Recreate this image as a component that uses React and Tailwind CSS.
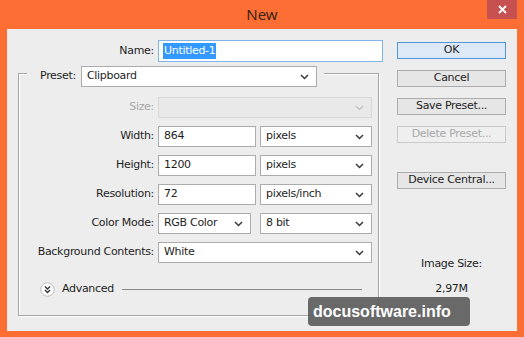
import React from 'react';

const Arrow = ({ disabled }) => (
    <svg width="9" height="6" viewBox="0 0 9 6" className="shrink-0">
        <polyline points="1,1 4.5,4.5 8,1" fill="none" stroke={disabled ? '#c4c4c4' : '#3a3a3a'} strokeWidth="1.5" />
    </svg>
);

const Select = ({ w, text, disabled }) => (
    <div className={`${w} h-[21px] flex items-center justify-between pl-[5px] pr-[7px] border ${disabled ? 'border-[#d9d9d9] bg-[#e9e9e9]' : 'border-[#acacac] bg-white'}`}>
        <span>{text}</span>
        <Arrow disabled={disabled} />
    </div>
);

const Field = ({ w, text }) => (
    <div className={`${w} h-[21px] flex items-center pl-[5px] border border-[#acacac] bg-white`}>{text}</div>
);

const Row = ({ label, disabled, children }) => (
    <div className="flex items-center h-[21px]">
        <div className={`w-[139px] pr-[4px] text-right ${disabled ? 'text-[#a8a8a8]' : ''}`}>{label}</div>
        <div className="flex gap-[4px]">{children}</div>
    </div>
);

const Button = ({ text, disabled, primary }) => (
    <div
        className={`w-[109px] h-[17px] flex items-center justify-center border ${
            primary
                ? 'border-[#4f97d8] bg-[#dde9f6]'
                : disabled
                ? 'border-[#cacaca] bg-[#efefef] text-[#a8a8a8]'
                : 'border-[#acacac] bg-[#e6e6e6]'
        }`}
    >
        {text}
    </div>
);

export default function App() {
    return (
        <div className="relative w-[524px] h-[337px] bg-[#fd6e34] flex flex-col font-['DejaVu_Sans',sans-serif] text-[11px] tracking-[-0.3px] text-[#1e1e1e]">
            {/* title bar */}
            <div className="relative h-[29px] flex items-center justify-center">
                <span className="font-['Noto_Sans',sans-serif] text-[15px] tracking-normal text-[#3b2418] -mt-[1px]">New</span>
                <div className="absolute right-[7px] top-0 w-[30px] h-[19px] bg-[#c75150] flex items-center justify-center">
                    <svg width="9" height="9" viewBox="0 0 9 9">
                        <path d="M1 1 L8 8 M8 1 L1 8" stroke="#fff" strokeWidth="1.8" />
                    </svg>
                </div>
            </div>

            {/* client area */}
            <div className="mx-[7px] h-[302px] bg-[#ededed] flex">
                <div className="w-[383px] flex flex-col">
                    <div className="flex items-center mt-[11px] h-[22px]">
                        <div className="w-[151px] pr-[4px] text-right">Name:</div>
                        <div className="w-[225px] h-[22px] flex items-center pl-[4px] border border-[#7eb4ea] bg-white">
                            <span className="bg-[#3399ff] text-white px-[1px]">Untitled-1</span>
                        </div>
                    </div>

                    {/* group box */}
                    <div className="ml-[11px] mt-[11px] w-[361px] h-[243px] border border-[#a5a5a5] shadow-[inset_1px_1px_0_#fff,1px_1px_0_#fff] flex flex-col">
                        <div className="-mt-[8px] ml-[8px] w-fit flex items-center gap-[5px] pl-[13px] pr-[7px] bg-[#ededed]">
                            <span>Preset:</span>
                            <Select w="w-[236px]" text="Clipboard" />
                        </div>
                        <div className="mt-[10px] flex flex-col gap-[8px]">
                            <Row label="Size:" disabled>
                                <Select w="w-[214px]" text="" disabled />
                            </Row>
                            <Row label="Width:">
                                <Field w="w-[98px]" text="864" />
                                <Select w="w-[112px]" text="pixels" />
                            </Row>
                            <Row label="Height:">
                                <Field w="w-[98px]" text="1200" />
                                <Select w="w-[112px]" text="pixels" />
                            </Row>
                            <Row label="Resolution:">
                                <Field w="w-[98px]" text="72" />
                                <Select w="w-[112px]" text="pixels/inch" />
                            </Row>
                            <Row label="Color Mode:">
                                <Select w="w-[93px]" text="RGB Color" />
                                <div className="w-[1px]" />
                                <Select w="w-[112px]" text="8 bit" />
                            </Row>
                            <Row label="Background Contents:">
                                <Select w="w-[214px]" text="White" />
                            </Row>
                        </div>
                        <div className="mt-[18px] ml-[21px] flex items-center gap-[7px]">
                            <svg width="15" height="15" viewBox="0 0 15 15">
                                <circle cx="7.5" cy="7.5" r="6.8" fill="#fbfbfb" stroke="#bdbdbd" />
                                <polyline points="5,4.5 7.5,7 10,4.5" fill="none" stroke="#333" strokeWidth="1.3" />
                                <polyline points="5,8 7.5,10.5 10,8" fill="none" stroke="#333" strokeWidth="1.3" />
                            </svg>
                            <span>Advanced</span>
                            <div className="w-[240px] h-[1px] bg-[#8a8a8a] ml-[1px]" />
                        </div>
                    </div>
                </div>

                {/* buttons */}
                <div className="ml-[7px] flex flex-col items-center w-[109px]">
                    <div className="mt-[13px] flex flex-col gap-[11px]">
                        <Button text="OK" primary />
                        <Button text="Cancel" />
                        <Button text="Save Preset..." />
                        <Button text="Delete Preset..." disabled />
                    </div>
                    <div className="mt-[29px]">
                        <Button text="Device Central..." />
                    </div>
                    <div className="mt-[68px] leading-[14px]">Image Size:</div>
                    <div className="mt-[11px] leading-[14px]">2,97M</div>
                </div>
            </div>

            {/* watermark */}
            <div className="absolute left-[308px] top-[297px] w-[162px] h-[29px] rounded-[4px] bg-[#5a5a5a]/90 flex items-center pl-[5px]">
                <span className="font-['Liberation_Sans',sans-serif] font-bold text-[16px] tracking-normal text-white">docusoftware.info</span>
            </div>
        </div>
    );
}
